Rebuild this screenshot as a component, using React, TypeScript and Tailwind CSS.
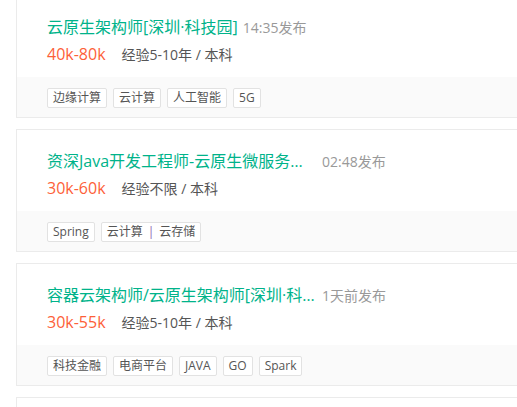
import React from "react";

interface Job {
  title: string;
  time: string;
  salary: string;
  req: string;
  tags: React.ReactNode[];
}

const jobs: Job[] = [
  {
    title: "云原生架构师[深圳·科技园]",
    time: "14:35发布",
    salary: "40k-80k",
    req: "经验5-10年 / 本科",
    tags: ["边缘计算", "云计算", "人工智能", "5G"],
  },
  {
    title: "资深Java开发工程师-云原生微服务架构师",
    time: "02:48发布",
    salary: "30k-60k",
    req: "经验不限 / 本科",
    tags: [
      "Spring",
      <>
        云计算<span className="mx-[5px] text-[#8e5fb3]">|</span>云存储
      </>,
    ],
  },
  {
    title: "容器云架构师/云原生架构师[深圳·科技园]",
    time: "1天前发布",
    salary: "30k-55k",
    req: "经验5-10年 / 本科",
    tags: ["科技金融", "电商平台", "JAVA", "GO", "Spark"],
  },
  {
    title: "云原生开发工程师[深圳·南山区]",
    time: "1天前发布",
    salary: "25k-45k",
    req: "经验3-5年 / 本科",
    tags: ["云计算", "容器"],
  },
];

function JobCard({ job }: { job: Job }) {
  return (
    <div className="mb-[11px] w-[560px] border border-[#ebebeb] bg-white">
      <div className="px-[30px] pt-[19px] pb-[11px]">
        <div className="flex h-6 items-center">
          <span className="inline-block max-w-[270px] truncate text-[16px] text-[#00b38a]">
            {job.title}
          </span>
          <span className="ml-[5px] text-[14px] text-[#999]">{job.time}</span>
        </div>
        <div className="mt-[3px] flex h-6 items-center">
          <span className="text-[16px] text-[#fd5f39]">{job.salary}</span>
          <span className="ml-[16px] text-[14px] text-[#555]">{job.req}</span>
        </div>
      </div>
      <div className="flex h-10 items-center gap-[6px] bg-[#fafafa] px-[30px] pt-[2px]">
        {job.tags.map((t, i) => (
          <span
            key={i}
            className="flex h-[20px] items-center rounded-[2px] border border-[#e2e2e2] bg-white px-[5px] text-[12px] text-[#555]"
          >
            {t}
          </span>
        ))}
      </div>
    </div>
  );
}

export default function App() {
  return (
    <div
      className="h-[407px] w-[517px] overflow-hidden bg-white"
      style={{ fontFamily: '"Open Sans", "Noto Sans CJK SC", sans-serif' }}
    >
      <div className="-mt-[5px] pl-4">
        {jobs.map((j, i) => (
          <JobCard key={i} job={j} />
        ))}
      </div>
    </div>
  );
}
